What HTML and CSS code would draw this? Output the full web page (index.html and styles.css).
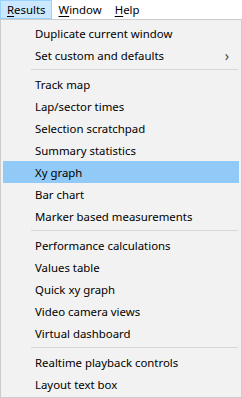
FILE: index.html
```html
<!DOCTYPE html>
<html lang="en">
  <head>
    <meta charset="UTF-8" />
    <meta name="viewport" content="width=device-width, initial-scale=1.0" />
    <title>Results menu</title>

    <link rel="stylesheet" href="styles.css">
  </head>
  <body>
    <!-- 메뉴바 -->
    <div class="menubar">
      <span class="menubar-item active"><u>R</u>esults</span>
      <span class="menubar-item"><u>W</u>indow</span>
      <span class="menubar-item"><u>H</u>elp</span>
    </div>

    <!-- 드롭다운 -->
    <ul class="menu">
      <li class="menu-item">Duplicate current window</li>
      <li class="menu-item">Set custom and defaults<span class="menu-arrow">&#8250;</span></li>
      <li class="menu-sep"></li>
      <li class="menu-item">Track map</li>
      <li class="menu-item">Lap/sector times</li>
      <li class="menu-item">Selection scratchpad</li>
      <li class="menu-item">Summary statistics</li>
      <li class="menu-item selected">Xy graph</li>
      <li class="menu-item">Bar chart</li>
      <li class="menu-item">Marker based measurements</li>
      <li class="menu-sep"></li>
      <li class="menu-item">Performance calculations</li>
      <li class="menu-item">Values table</li>
      <li class="menu-item">Quick xy graph</li>
      <li class="menu-item">Video camera views</li>
      <li class="menu-item">Virtual dashboard</li>
      <li class="menu-sep"></li>
      <li class="menu-item">Realtime playback controls</li>
      <li class="menu-item">Layout text box</li>
    </ul>
  </body>
</html>
```

FILE: styles.css
```css
body {
  margin: 0;
  background: #ffffff;
  font-family: "Noto Sans", "DejaVu Sans", sans-serif;
  font-size: 11.4px;
  color: #000000;
}
.menubar {
  display: flex;
  height: 19px;
}
.menubar-item {
  box-sizing: border-box;
  height: 19px;
  padding: 0 5px 0 6px;
  line-height: 18px;
  border: 1px solid transparent;
}
.menubar-item.active {
  background: #cce8ff;
  border-color: #99d1ff;
}
.menubar-item u {
  text-underline-offset: 2px;
}
.menu {
  margin: 0;
  padding: 2px;
  list-style: none;
  border: 1px solid #cccccc;
  background: #f2f2f2;
}
.menu-item {
  display: flex;
  align-items: center;
  height: 22px;
  padding-left: 32px;
  padding-right: 10px;
}
.menu-item.selected {
  background: #91c9f7;
}
.menu-arrow {
  margin-left: auto;
  font-size: 14px;
  color: #444444;
}
.menu-sep {
  height: 7px;
  margin-left: 28px;
  margin-right: 1px;
  display: flex;
  align-items: center;
}
.menu-sep::before {
  content: "";
  flex: 1;
  height: 1px;
  background: #d7d7d7;
}
```
